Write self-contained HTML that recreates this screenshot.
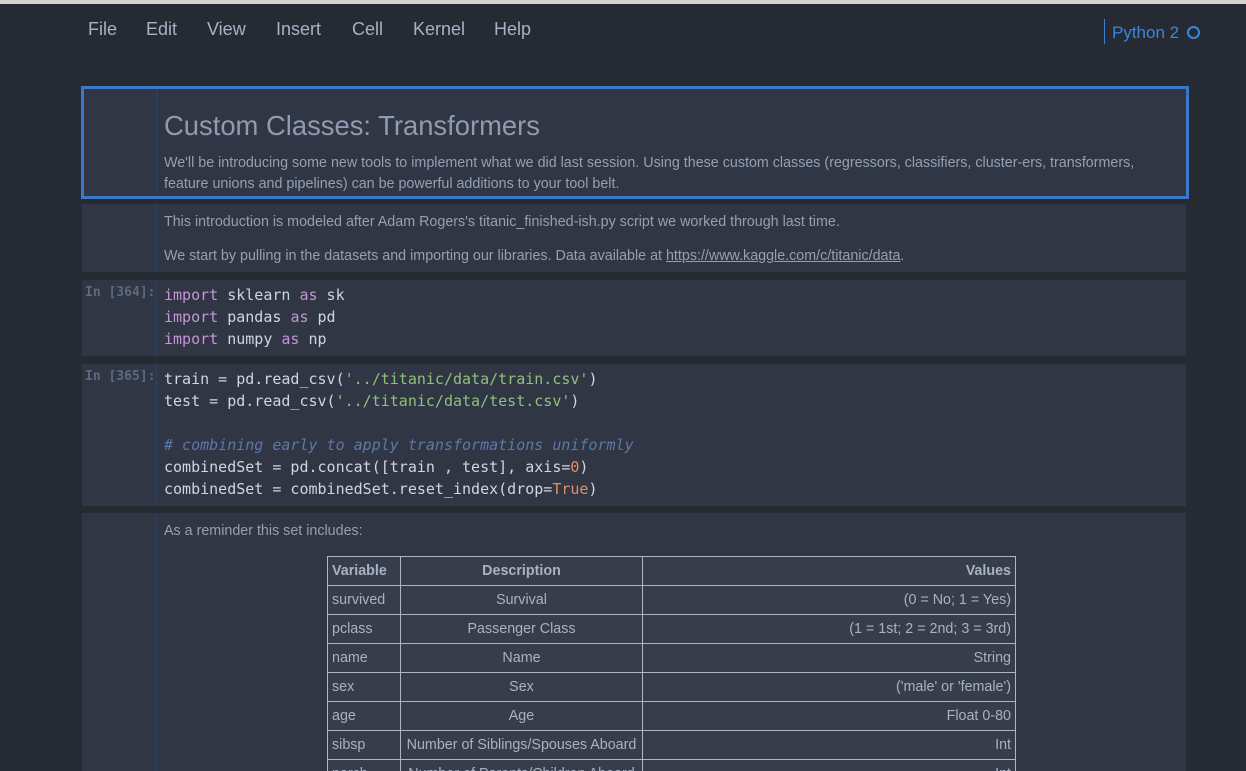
<!DOCTYPE html>
<html><head><meta charset="utf-8"><style>
*{margin:0;padding:0;box-sizing:border-box}
html,body{width:1246px;height:771px;overflow:hidden}
body{background:#262a33;font-family:"Liberation Sans",sans-serif;position:relative;color:#9aa6b8}
.top{position:absolute;left:0;top:0;width:1246px;height:4px;background:#d6d4cf}
.menu{position:absolute;top:19px;font-size:18px;color:#a6b2c4}
.kern{position:absolute;left:1104px;top:19px;height:25px;border-left:1px solid #3a7fd5;padding-left:7px;color:#3a87e0;font-size:17px;line-height:28px}
.kern span{display:inline-block;width:13px;height:13px;border:2px solid #3a87e0;border-radius:50%;margin-left:8px;vertical-align:-1px}
.cell{position:absolute;left:82px;width:1104px;background:#303644}
.pr{position:absolute;left:0;top:0;bottom:0;width:75px;border-right:2px solid #2a3e5c}
.c{position:absolute;left:82px;font-size:14.3px;color:#93a0b4}
.code{font-family:"DejaVu Sans Mono","Liberation Mono",monospace;font-size:15px;line-height:22px;color:#d0d6e0;white-space:pre;position:absolute;left:82px}
.lab{position:absolute;left:3px;font-family:"DejaVu Sans Mono",monospace;font-size:13px;font-weight:bold;color:#5c6a80}
.k{color:#c595d8}.s{color:#8fc17a}.cm{color:#5e78a8;font-style:italic}.n{color:#e88a6a}
table{position:absolute;left:327px;top:556px;border-collapse:collapse;font-size:14.3px;color:#a7b3c5;background:#373d4b}
td,th{border:1px solid #a9b7c9;height:29px;padding:0 4px}
th{font-weight:bold}
</style></head><body>
<div class="top"></div>
<div class="menu" style="left:88px">File</div>
<div class="menu" style="left:146px">Edit</div>
<div class="menu" style="left:207px">View</div>
<div class="menu" style="left:276px">Insert</div>
<div class="menu" style="left:352px">Cell</div>
<div class="menu" style="left:413px">Kernel</div>
<div class="menu" style="left:494px">Help</div>
<div class="kern">Python 2<span></span></div>

<div class="cell" style="left:81px;top:86px;width:1108px;height:113px;border:3px solid #3a78c9">
<div class="pr" style="width:74px"></div>
<div class="c" style="left:80px;top:21px;font-size:27.4px;color:#8e9bb0">Custom Classes: Transformers</div>
<div class="c" style="left:80px;top:64px;line-height:21px;width:1000px">We'll be introducing some new tools to implement what we did last session. Using these custom classes (regressors, classifiers, cluster-ers, transformers, feature unions and pipelines) can be powerful additions to your tool belt.</div>
</div>

<div class="cell" style="top:204px;height:68px"><div class="pr"></div>
<div class="c" style="top:10px">This introduction is modeled after Adam Rogers's titanic_finished-ish.py script we worked through last time.</div>
<div class="c" style="top:44px">We start by pulling in the datasets and importing our libraries. Data available at <u>https://www.kaggle.com/c/titanic/data</u>.</div>
</div>

<div class="cell" style="top:280px;height:76px"><div class="pr"></div>
<div class="lab" style="top:5px">In [364]:</div>
<div class="code" style="top:4px"><span class="k">import</span> sklearn <span class="k">as</span> sk
<span class="k">import</span> pandas <span class="k">as</span> pd
<span class="k">import</span> numpy <span class="k">as</span> np</div>
</div>

<div class="cell" style="top:364px;height:142px"><div class="pr"></div>
<div class="lab" style="top:5px">In [365]:</div>
<div class="code" style="top:4px">train = pd.read_csv(<span class="s">'../titanic/data/train.csv'</span>)
test = pd.read_csv(<span class="s">'../titanic/data/test.csv'</span>)

<span class="cm"># combining early to apply transformations uniformly</span>
combinedSet = pd.concat([train , test], axis=<span class="n">0</span>)
combinedSet = combinedSet.reset_index(drop=<span class="n">True</span>)</div>
</div>

<div class="cell" style="top:513px;height:258px"><div class="pr"></div>
<div class="c" style="top:10px">As a reminder this set includes:</div>
</div>
<table>
<tr><th style="width:73px;text-align:left">Variable</th><th style="width:242px">Description</th><th style="width:373px;text-align:right">Values</th></tr>
<tr><td>survived</td><td align="center">Survival</td><td align="right">(0 = No; 1 = Yes)</td></tr>
<tr><td>pclass</td><td align="center">Passenger Class</td><td align="right">(1 = 1st; 2 = 2nd; 3 = 3rd)</td></tr>
<tr><td>name</td><td align="center">Name</td><td align="right">String</td></tr>
<tr><td>sex</td><td align="center">Sex</td><td align="right">('male' or 'female')</td></tr>
<tr><td>age</td><td align="center">Age</td><td align="right">Float 0-80</td></tr>
<tr><td>sibsp</td><td align="center">Number of Siblings/Spouses Aboard</td><td align="right">Int</td></tr>
<tr><td>parch</td><td align="center">Number of Parents/Children Aboard</td><td align="right">Int</td></tr>
</table>
</body></html>
